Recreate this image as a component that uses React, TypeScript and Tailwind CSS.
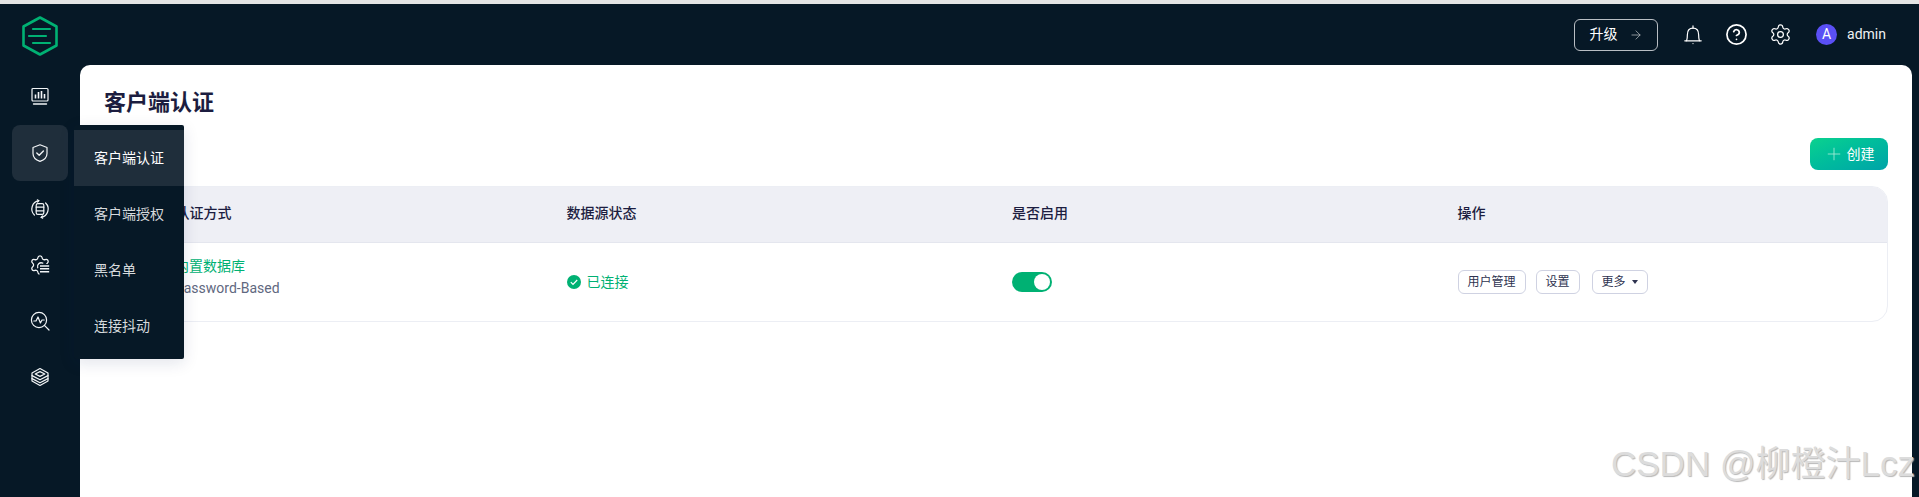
import type { ReactNode } from "react";
import { ArrowRight, CircleHelp, Plus, Settings } from "lucide-react";

function Logo() {
  return (
    <svg width="36" height="40" viewBox="0 0 36 40" fill="none" stroke="#00b173" strokeWidth="2.6" strokeLinecap="round" strokeLinejoin="round">
      <path d="M18 1.5 34.5 10.5V29.5L18 38.5 1.5 29.5V10.5Z" />
      <path d="M11 13H28M7 20H24M11 27H28" strokeWidth="2.2" />
    </svg>
  );
}

const iconProps = {
  width: 20,
  height: 20,
  viewBox: "0 0 20 20",
  fill: "none",
  stroke: "currentColor",
  strokeWidth: 1.2,
  strokeLinecap: "round" as const,
  strokeLinejoin: "round" as const,
};

function MonitorIcon() {
  return (
    <svg {...iconProps}>
      <rect x="2" y="1.5" width="16" height="12.5" rx="1" />
      <path d="M5.5 11.5V7.5M8.5 11.5V5M11.5 11.5V4M14.5 11.5V7" strokeWidth="1.6" strokeLinecap="butt" />
      <path d="M3.5 17H16.5" strokeWidth="1.4" />
    </svg>
  );
}
function ShieldIcon() {
  return (
    <svg {...iconProps}>
      <path d="M10 1.8 17 4.5V10.5C17 14.5 13.5 17.2 10 18.4 6.5 17.2 3 14.5 3 10.5V4.5Z" />
      <path d="M6.8 10 9.2 12.2 13.4 8" strokeWidth="1.4" />
    </svg>
  );
}
function SyncDbIcon() {
  return (
    <svg {...iconProps}>
      <path d="M4.4 16A8.4 8.4 0 0 1 8.8 1.7" />
      <path d="M15.6 4A8.4 8.4 0 0 1 11.2 18.3" />
      <path d="M8.8 1.7 7.4 .8M8.8 1.7 7.6 3M11.2 18.3 12.6 19.2M11.2 18.3 12.4 17" />
      <rect x="6.2" y="4.6" width="7.6" height="10.8" rx="1.6" />
      <path d="M6.2 8.2H13.8M6.2 11.8H13.8" />
    </svg>
  );
}
function GearDocIcon() {
  return (
    <svg width="22" height="22" viewBox="0 0 24 24" fill="none" stroke="currentColor" strokeWidth="1.4" strokeLinecap="round" strokeLinejoin="round">
      <clipPath id="gear-open">
        <path d="M0 0H24V11H11.5V24H0Z" />
      </clipPath>
      <path
        clipPath="url(#gear-open)"
        d="M9.671 4.136a2.34 2.34 0 0 1 4.659 0 2.34 2.34 0 0 0 3.319 1.915 2.34 2.34 0 0 1 2.33 4.033 2.34 2.34 0 0 0 0 3.831 2.34 2.34 0 0 1-2.33 4.033 2.34 2.34 0 0 0-3.319 1.915 2.34 2.34 0 0 1-4.659 0 2.34 2.34 0 0 0-3.32-1.915 2.34 2.34 0 0 1-2.33-4.033 2.34 2.34 0 0 0 0-3.831A2.34 2.34 0 0 1 6.35 6.051a2.34 2.34 0 0 0 3.32-1.915"
      />
      <path d="M15 10A4 4 0 0 0 9.5 15" />
      <path d="M12 13H22M12 16.2H22M12 19.4H22" strokeWidth="1.6" strokeLinecap="butt" />
    </svg>
  );
}
function SearchPulseIcon() {
  return (
    <svg {...iconProps}>
      <circle cx="9" cy="9" r="7.6" />
      <path d="M14.4 14.4 19 19" />
      <path d="M3.8 10H6L8 6 10.4 12 12 9H14.2" />
    </svg>
  );
}
function LayersIcon() {
  return (
    <svg {...iconProps}>
      <path d="M10 1.5 18 6V14L10 18.5 2 14V6Z" />
      <path d="M5.2 7 10 4.6 14.8 7 10 9.4Z" />
      <path d="M2 8.6 10 12.8 18 8.6" />
      <path d="M2 11.6 10 15.8 18 11.6" />
    </svg>
  );
}
function BellIcon() {
  return (
    <svg width="18" height="20" viewBox="0 0 18 20" fill="none" stroke="currentColor" strokeWidth="1.2" strokeLinecap="round" strokeLinejoin="round" className="ml-[26px]">
      <path d="M.8 15.8H17.2" />
      <path d="M2.6 15.8C3.2 14 3.4 12.5 3.4 9.6 3.4 6 5.4 3.2 9 3.2S14.6 6 14.6 9.6C14.6 12.5 14.8 14 15.4 15.8" />
      <path d="M9 .9V3.2" />
      <circle cx="9" cy="18.6" r=".6" fill="currentColor" stroke="none" />
    </svg>
  );
}

const navIcons = [MonitorIcon, ShieldIcon, SyncDbIcon, GearDocIcon, SearchPulseIcon, LayersIcon];
const menuItems = ["客户端认证", "客户端授权", "黑名单", "连接抖动"];

function OutlineButton({ children, className = "" }: { children: ReactNode; className?: string }) {
  return (
    <button className={`h-[24px] px-[9px] flex items-center border border-[#cfd2e2] rounded-[6px] bg-white text-[12px] text-[#2e3350] ${className}`}>
      {children}
    </button>
  );
}

export default function App() {
  return (
    <div className="relative h-[497px] w-[1919px] overflow-hidden flex flex-col bg-[#061826] font-['Roboto','Noto_Sans_CJK_SC',sans-serif]">
      <div className="h-[4px] bg-[#e4e4e4] shrink-0" />
      <div className="flex flex-1 min-h-0">
        <aside className="w-[80px] shrink-0 flex flex-col items-center">
          <div className="h-[65px] flex items-start pt-[12px] shrink-0">
            <Logo />
          </div>
          {navIcons.map((Icon, i) => (
            <div
              key={i}
              className={`w-[56px] h-[56px] shrink-0 flex items-center justify-center rounded-[8px] text-[#f2f5f7] ${i === 1 ? "bg-[#1f2e3b]" : ""}`}
            >
              <Icon />
            </div>
          ))}
        </aside>
        <div className="flex-1 min-w-0 flex flex-col pr-[7px]">
          <header className="h-[61px] shrink-0 flex items-center justify-end text-white">
            <button className="w-[84px] h-[32px] flex items-center justify-center gap-[11px] border border-[#b9bec4] rounded-[6px] text-[14px]">
              <span>升级</span>
              <ArrowRight size={14} strokeWidth={1.2} className="text-[#c4c8cc]" />
            </button>
            <BellIcon />
            <CircleHelp size={23} strokeWidth={1.8} className="ml-[23px]" />
            <Settings size={23} strokeWidth={1.3} className="ml-[21px]" />
            <div className="ml-[24px] w-[21px] h-[21px] rounded-full bg-[#5a4ff5] flex items-center justify-center text-[14px]">A</div>
            <span className="ml-[10px] mr-[26px] text-[14px] text-[#eef1f3]">admin</span>
          </header>
          <main className="flex-1 min-h-0 bg-white rounded-t-[10px] px-[24px]">
            <h1 className="h-[73px] pt-[22px] text-[22px] leading-[32px] font-semibold text-[#1c1d40]">客户端认证</h1>
            <div className="h-[48px] flex items-start justify-end">
              <button className="w-[78px] h-[32px] rounded-[8px] flex items-center justify-center gap-[3px] text-[14px] text-white bg-gradient-to-br from-[#0cd28e] to-[#00a3a8]">
                <Plus size={20} strokeWidth={1} className="text-[#a9ecd7]" />
                <span>创建</span>
              </button>
            </div>
            <div className="rounded-[16px] border border-[#eceef4] overflow-hidden">
              <div className="grid grid-cols-4 h-[56px] pb-[2px] items-center bg-[#eeeff5] border-b border-[#e4e6ee] text-[14px] font-medium text-[#1c1d40]">
                <div className="px-[16px]">数据源 / 认证方式</div>
                <div className="px-[16px]">数据源状态</div>
                <div className="px-[16px]">是否启用</div>
                <div className="px-[16px]">操作</div>
              </div>
              <div className="grid grid-cols-4 h-[78px] items-center text-[14px]">
                <div className="px-[16px] flex items-center gap-[14px]">
                  <div className="w-[40px] h-[40px] rounded-[6px] bg-[#eeeff5]" />
                  <div className="flex flex-col gap-[1px] leading-[21px] mb-[9px]">
                    <span className="text-[#00b173]">内置数据库</span>
                    <span className="text-[#5f6880]">Password-Based</span>
                  </div>
                </div>
                <div className="px-[16px] flex items-center gap-[6px] text-[#00b173]">
                  <svg width="14" height="14" viewBox="0 0 14 14">
                    <circle cx="7" cy="7" r="7" fill="#00b173" />
                    <path d="M3.8 7.2 6 9.4 10.2 5" fill="none" stroke="#fff" strokeWidth="1.2" />
                  </svg>
                  <span>已连接</span>
                </div>
                <div className="px-[16px]">
                  <div className="w-[40px] h-[20px] rounded-full bg-[#00b173] flex items-center justify-end pr-[2px]">
                    <div className="w-[16px] h-[16px] rounded-full bg-white" />
                  </div>
                </div>
                <div className="px-[16px] flex items-center gap-[10px]">
                  <OutlineButton>用户管理</OutlineButton>
                  <OutlineButton>设置</OutlineButton>
                  <OutlineButton className="ml-[2px]">
                    更多
                    <svg width="6" height="4" viewBox="0 0 6 4" className="ml-[6px]">
                      <path d="M0 0H6L3 4Z" fill="#2e3350" />
                    </svg>
                  </OutlineButton>
                </div>
              </div>
            </div>
          </main>
        </div>
      </div>

      <nav className="absolute left-[74px] top-[125px] w-[110px] h-[234px] pt-[5px] bg-[#061826] rounded-[2px] shadow-[0_4px_16px_rgba(20,30,90,0.12)] text-[14px]">
        {menuItems.map((label, i) => (
          <div
            key={label}
            className={`h-[56px] pl-[20px] flex items-center ${i === 0 ? "bg-[#1f2e3b] text-white" : "text-[#d6dadd]"}`}
          >
            {label}
          </div>
        ))}
      </nav>

      <div className="absolute left-[1611px] top-[439px] text-[35px] leading-[50px] whitespace-nowrap text-[#dcdcdc] font-['Liberation_Sans','Noto_Sans_CJK_SC',sans-serif] [text-shadow:1px_1px_1px_#b8b8b8]">
        CSDN @柳橙汁Lcz
      </div>
    </div>
  );
}
